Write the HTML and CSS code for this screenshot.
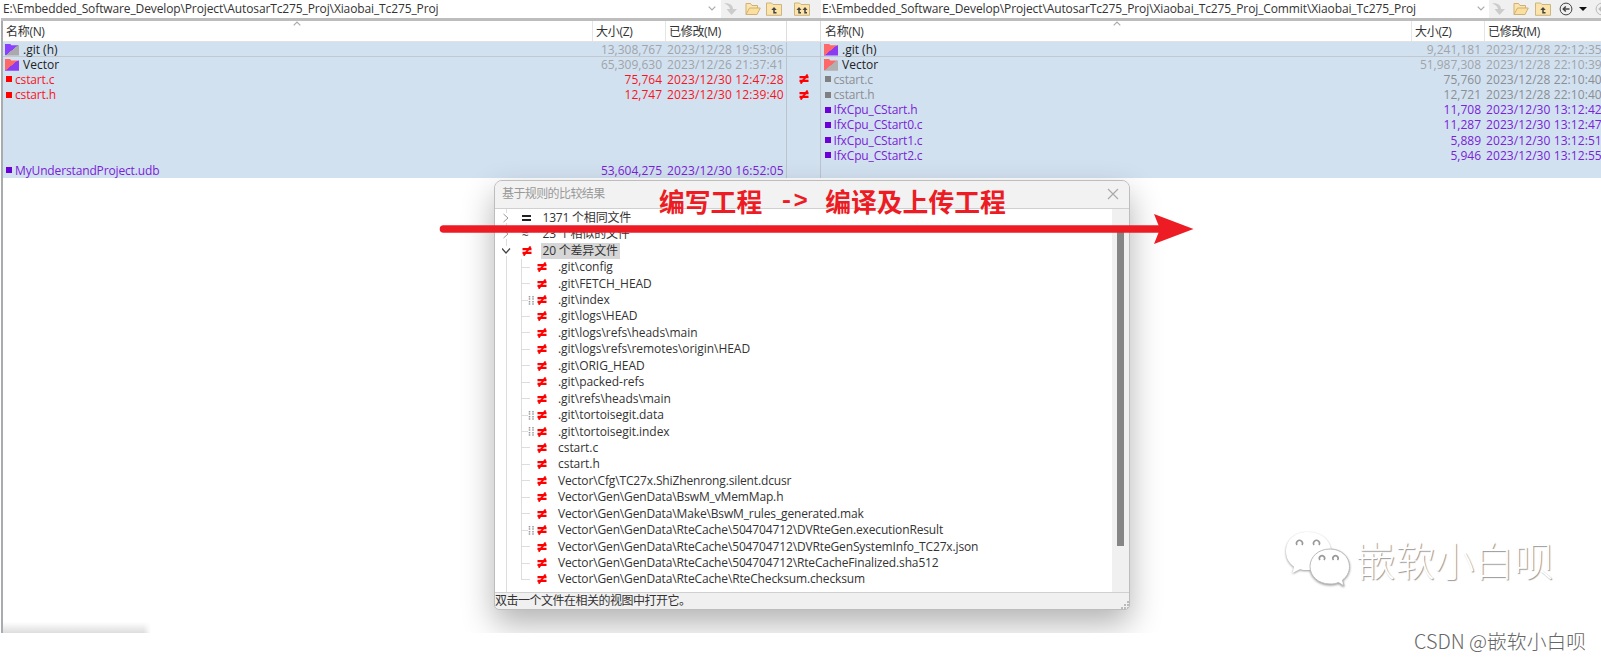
FILE: index.html
```
<!DOCTYPE html>
<html lang="zh-CN">
<head>
<meta charset="utf-8">
<title>Compare</title>
<link rel="stylesheet" href="styles.css">
</head>
<body>
<svg class="defs" aria-hidden="true">
  <defs>
    <symbol id="neq" viewBox="0 0 10 10"><path d="M.5 3.1h9M.5 6.900h9" stroke="#f00" stroke-width="2.300"/><path d="M8.600.5 1.600 9.600" stroke="#f00" stroke-width="2"/></symbol>
    <symbol id="chev" viewBox="0 0 8 5"><path d="M.7.7 4 4 7.300.7" fill="none" stroke="#aaa" stroke-width="1.2"/></symbol>
    <symbol id="go" viewBox="0 0 16 14"><path d="M1 1.500c5-1 9 1.500 9 5.500h4L8.500 13 3.500 7H7C6.500 4.500 4.500 2.500 1 1.500z" fill="#ccc"/></symbol>
    <symbol id="open" viewBox="0 0 16 14"><path d="M1 12.500V1.500h4.500l1.500 2h5.500v3" fill="#fbe5ae" stroke="#cfb173"/><path d="M1 12.500 4.500 6h10.800L12 12.500z" fill="#fbdf9f" stroke="#cfb173"/></symbol>
    <symbol id="up" viewBox="0 0 16 14"><path d="M.5 13.300V1h5l1.500 1.500h8.500v10.800z" fill="#fbe3aa" stroke="#cdb57f"/><path d="M8 6v4.700h2.500" fill="none" stroke="#444" stroke-width="1.500"/><path d="M5.300 8 8 5l2.700 3z" fill="#444"/></symbol>
    <symbol id="upup" viewBox="0 0 16 14"><path d="M.5 13.300V1h5l1.500 1.500h8.500v10.800z" fill="#fbe3aa" stroke="#cdb57f"/><path d="M5 6v4.700h2M11 6v4.700h2" fill="none" stroke="#444" stroke-width="1.500"/><path d="M2.500 8 5 5l2.500 3zM8.500 8 11 5l2.500 3z" fill="#444"/></symbol>
    <symbol id="back" viewBox="0 0 14 14"><circle cx="7" cy="7" r="5.900" fill="none" stroke="currentColor" stroke-width="1"/><path d="M10.500 7H4.500M6.800 4.500 4.300 7l2.500 2.500" fill="none" stroke="currentColor" stroke-width="1.500"/></symbol>
    <symbol id="bits" viewBox="0 0 7 9"><path d="M1.500 0v4M5 0v4M1.500 5v4M5 5v4" stroke="#999" stroke-width="1.500" stroke-dasharray="1.500 .7"/></symbol>
  </defs>
</svg>
<main class="window">
  <section class="side left">
    <div class="bar">
      <div class="path"><span class="p1">E:\Embedded_Software_Develop\Project\AutosarTc275_Proj\Xiaobai_Tc275_Proj</span><svg class="chev"><use href="#chev"/></svg></div>
      <div class="tools"><svg><use href="#go"/></svg><svg><use href="#open"/></svg><svg><use href="#up"/></svg></div>
    </div>
    <div class="head"><span>名称(N)</span><span>大小(Z)</span><span>已修改(M)</span><svg class="sort"><use href="#chev"/></svg></div>
    <div class="rows">
      <div class="row dir"><span class="name"><i class="folder vg"></i>.git (h)</span><span class="size">13,308,767</span><span class="date">2023/12/28 19:53:06</span></div>
      <div class="row dir"><span class="name"><i class="folder rv"></i>Vector</span><span class="size">65,309,630</span><span class="date">2023/12/26 21:37:41</span></div>
      <div class="row red"><span class="name"><i class="dot"></i>cstart.c</span><span class="size">75,764</span><span class="date">2023/12/30 12:47:28</span></div>
      <div class="row red"><span class="name"><i class="dot"></i>cstart.h</span><span class="size">12,747</span><span class="date">2023/12/30 12:39:40</span></div>
      <div class="row"></div><div class="row"></div><div class="row"></div><div class="row"></div>
      <div class="row violet"><span class="name"><i class="dot"></i>MyUnderstandProject.udb</span><span class="size">53,604,275</span><span class="date">2023/12/30 16:52:05</span></div>
    </div>
  </section>
  <section class="mid">
    <div class="bar"><svg><use href="#upup"/></svg></div>
    <div class="head"></div>
    <div class="rows">
      <div class="row dir"></div><div class="row"></div>
      <div class="row"><svg><use href="#neq"/></svg></div>
      <div class="row"><svg><use href="#neq"/></svg></div>
      <div class="row"></div><div class="row"></div><div class="row"></div><div class="row"></div><div class="row"></div>
    </div>
  </section>
  <section class="side right">
    <div class="bar">
      <div class="path"><span class="p2">E:\Embedded_Software_Develop\Project\AutosarTc275_Proj\Xiaobai_Tc275_Proj_Commit\Xiaobai_Tc275_Proj</span><svg class="chev"><use href="#chev"/></svg></div>
      <div class="tools"><svg><use href="#go"/></svg><svg><use href="#open"/></svg><svg><use href="#up"/></svg><svg class="circ"><use href="#back"/></svg><i class="tri"></i><svg class="circ off"><use href="#back"/></svg></div>
    </div>
    <div class="head"><span>名称(N)</span><span>大小(Z)</span><span>已修改(M)</span><svg class="sort"><use href="#chev"/></svg></div>
    <div class="rows">
      <div class="row dir"><span class="name"><i class="folder rv"></i>.git (h)</span><span class="size">9,241,181</span><span class="date">2023/12/28 22:12:35</span></div>
      <div class="row dir"><span class="name"><i class="folder rg"></i>Vector</span><span class="size">51,987,308</span><span class="date">2023/12/28 22:10:39</span></div>
      <div class="row gray"><span class="name"><i class="dot"></i>cstart.c</span><span class="size">75,760</span><span class="date">2023/12/28 22:10:40</span></div>
      <div class="row gray"><span class="name"><i class="dot"></i>cstart.h</span><span class="size">12,721</span><span class="date">2023/12/28 22:10:40</span></div>
      <div class="row violet"><span class="name"><i class="dot"></i>IfxCpu_CStart.h</span><span class="size">11,708</span><span class="date">2023/12/30 13:12:42</span></div>
      <div class="row violet"><span class="name"><i class="dot"></i>IfxCpu_CStart0.c</span><span class="size">11,287</span><span class="date">2023/12/30 13:12:47</span></div>
      <div class="row violet"><span class="name"><i class="dot"></i>IfxCpu_CStart1.c</span><span class="size">5,889</span><span class="date">2023/12/30 13:12:51</span></div>
      <div class="row violet"><span class="name"><i class="dot"></i>IfxCpu_CStart2.c</span><span class="size">5,946</span><span class="date">2023/12/30 13:12:55</span></div>
      <div class="row"></div>
    </div>
  </section>

  <div class="edge"></div>

  <div class="dialog">
    <div class="title"><span>基于规则的比较结果</span><svg viewBox="0 0 12 12"><path d="M1 1l10 10M11 1 1 11" stroke="#aaa" stroke-width="1.200"/></svg></div>
    <div class="content">
      <div class="tree">
        <div class="top"><svg class="tw" viewBox="0 0 10 10"><path d="M1.500 1 6 5 1.500 9" fill="none" stroke="#999"/></svg><b class="eq"></b><span>1371 个相同文件</span></div>
        <div class="top"><svg class="tw" viewBox="0 0 10 10"><path d="M1.500 1 6 5 1.500 9" fill="none" stroke="#999"/></svg><b class="approx">≈</b><span>23 个相似的文件</span></div>
        <div class="top"><svg class="tw" viewBox="0 0 10 10"><path d="M0 2.500 4 7l4-4.500" fill="none" stroke="#444" stroke-width="1.200"/></svg><svg class="ne"><use href="#neq"/></svg><span class="sel">20 个差异文件</span></div>
        <div class="kids">
          <div class="item"><svg class="ne"><use href="#neq"/></svg><span>.git\config</span></div>
          <div class="item"><svg class="ne"><use href="#neq"/></svg><span>.git\FETCH_HEAD</span></div>
          <div class="item bin"><svg class="bits"><use href="#bits"/></svg><svg class="ne"><use href="#neq"/></svg><span>.git\index</span></div>
          <div class="item"><svg class="ne"><use href="#neq"/></svg><span>.git\logs\HEAD</span></div>
          <div class="item"><svg class="ne"><use href="#neq"/></svg><span>.git\logs\refs\heads\main</span></div>
          <div class="item"><svg class="ne"><use href="#neq"/></svg><span>.git\logs\refs\remotes\origin\HEAD</span></div>
          <div class="item"><svg class="ne"><use href="#neq"/></svg><span>.git\ORIG_HEAD</span></div>
          <div class="item"><svg class="ne"><use href="#neq"/></svg><span>.git\packed-refs</span></div>
          <div class="item"><svg class="ne"><use href="#neq"/></svg><span>.git\refs\heads\main</span></div>
          <div class="item bin"><svg class="bits"><use href="#bits"/></svg><svg class="ne"><use href="#neq"/></svg><span>.git\tortoisegit.data</span></div>
          <div class="item bin"><svg class="bits"><use href="#bits"/></svg><svg class="ne"><use href="#neq"/></svg><span>.git\tortoisegit.index</span></div>
          <div class="item"><svg class="ne"><use href="#neq"/></svg><span>cstart.c</span></div>
          <div class="item"><svg class="ne"><use href="#neq"/></svg><span>cstart.h</span></div>
          <div class="item long"><svg class="ne"><use href="#neq"/></svg><span>Vector\Cfg\TC27x.ShiZhenrong.silent.dcusr</span></div>
          <div class="item long"><svg class="ne"><use href="#neq"/></svg><span>Vector\Gen\GenData\BswM_vMemMap.h</span></div>
          <div class="item long"><svg class="ne"><use href="#neq"/></svg><span>Vector\Gen\GenData\Make\BswM_rules_generated.mak</span></div>
          <div class="item bin long"><svg class="bits"><use href="#bits"/></svg><svg class="ne"><use href="#neq"/></svg><span>Vector\Gen\GenData\RteCache\504704712\DVRteGen.executionResult</span></div>
          <div class="item long"><svg class="ne"><use href="#neq"/></svg><span>Vector\Gen\GenData\RteCache\504704712\DVRteGenSystemInfo_TC27x.json</span></div>
          <div class="item long"><svg class="ne"><use href="#neq"/></svg><span>Vector\Gen\GenData\RteCache\504704712\RteCacheFinalized.sha512</span></div>
          <div class="item long"><svg class="ne"><use href="#neq"/></svg><span>Vector\Gen\GenData\RteCache\RteChecksum.checksum</span></div>
        </div>
      </div>
      <div class="scroll"><div class="thumb"></div></div>
    </div>
    <div class="status"><span>双击一个文件在相关的视图中打开它。</span><svg viewBox="0 0 8 8"><path d="M6 0h2v2H6zM3 3h2v2H3zM6 3h2v2H6zM0 6h2v2H0zM3 6h2v2H3zM6 6h2v2H6z" fill="#bbb"/></svg></div>
  </div>

  <div class="note"><span>编写工程</span><span class="to">-&gt;</span><span>编译及上传工程</span></div>
  <svg class="arrow" viewBox="0 0 760 32"><path d="M4.500 16H730" stroke="#ed1c24" stroke-width="7.600" stroke-linecap="round"/><path d="M715 1 754.500 16 715 31 721 16z" fill="#ed1c24"/></svg>

  <div class="wechat">
    <svg viewBox="0 0 68 58">
      <path d="M23.500 2C10.500 2 2 10.500 2 21.500c0 6.500 3 11.500 8 15.300L8.500 43l7.500-3.800c4 1 7 1.100 11 .6C43 38 48 30 47 19.500 45.500 8 35 2 23.500 2z"/>
      <path class="front" d="M46 19c-12 0-20 8-20 17.500S34 54 46 54c3.500 0 6-.5 8.500-1.500L60 56l-1.500-6c4.500-3.200 7-8 7-13.500C65.500 27 57.500 19 46 19z"/>
      <g class="eyes"><path d="M13 15a3 3 0 1 1 5 0M30 15a3 3 0 1 1 5 0M36 30a2.600 2.600 0 1 1 4 0M49.500 30a2.600 2.600 0 1 1 4 0"/></g>
    </svg>
    <span>嵌软小白呗</span>
  </div>
</main>
<footer>CSDN @嵌软小白呗</footer>
</body>
</html>
```
FILE: styles.css
```
* { box-sizing: border-box; }
body { margin: 0; width: 1601px; height: 661px; overflow: hidden; background: #fff; font: 12px/15.2px "Open Sans", "Noto Sans CJK SC", sans-serif; color: #333; }
span { white-space: nowrap; }
svg { display: block; flex: none; }
.defs { position: absolute; width: 0; height: 0; }
.window { position: relative; display: grid; grid-template-columns: 787px 34px 780px; height: 633px; overflow: hidden; }
.side, .mid { min-width: 0; overflow: hidden; }
.side.left { border-left: 1px solid #fff; }
.bar { height: 21px; display: flex; background: #f0f0f0; border-bottom: 3px solid #bdbdbd; }
.path { flex: none; width: 720px; background: #fff; display: flex; justify-content: space-between; align-items: center; padding: 0 5px 1px 2px; }
.right .path { width: 668px; padding-left: 1px; padding-right: 4px; }
.p1 { letter-spacing: -.12px; }
.p2 { letter-spacing: -.11px; }
.chev { width: 8px; height: 5px; }
.tools { display: flex; align-items: center; gap: 6px; padding-left: 2px; }
.left .tools { gap: 5.500px; }
.tools svg, .mid .bar svg { width: 16px; height: 14px; }
.tools .circ { width: 14px; height: 14px; margin-left: 2px; color: #444; }
.tools .off { color: #bbb; }
.tri { border: 4px solid transparent; border-top: 4px solid #111; border-bottom: 0; }
.mid .bar { padding: 2px 0 0 7px; }
.head { height: 20.500px; position: relative; display: grid; grid-template-columns: 591px 73px 1fr; align-items: center; border-bottom: 1px solid #e2e2e2; }
.right .head { grid-template-columns: 590px 73px 1fr; }
.head span { height: 20px; line-height: 21.500px; padding-left: 3px; border-left: 1px solid #e5e5e5; letter-spacing: -.3px; }
.head span:first-child { border: 0; padding-left: 5px; }
.right .head span:first-child { padding-left: 4px; }
.left .head, .mid .head { border-right: 1px solid #ddd; }
.sort { position: absolute; left: 292px; top: 0; width: 8px; height: 5px; transform: scaleY(-1); }
.rows { background: #d2e1f0; padding-bottom: .5px; }
.left .rows, .mid .rows { border-right: 1px solid #bcc5ce; }
.row { height: 15.170px; display: grid; grid-template-columns: 591px 70px 1fr; align-items: center; line-height: 15px; }
.right .row { grid-template-columns: 590px 70px 1fr; }
.row:first-child { border-bottom: 1px solid #c2c8ce; }
.name { display: flex; align-items: center; gap: 3px; padding-left: 5px; letter-spacing: -.14px; }
.right .name { padding-left: 4px; gap: 2.500px; }
.size { text-align: right; }
.date { padding-left: 5px; white-space: nowrap; letter-spacing: .08px; }
.left .date { letter-spacing: .13px; }
.dir { color: #a0a4a8; }
.dir .name { color: #222; gap: 4px; padding-left: 4px; letter-spacing: 0; }
.right .dir .name { padding-left: 3px; }
.red { color: #f8141c; }
.violet { color: #7a22d8; }
.gray { color: #8b8e92; }
.dot { width: 6px; height: 6px; background: #f00; }
.violet .dot { background: #6c00d8; }
.gray .dot { background: #808080; }
.folder { width: 14px; height: 12px; margin-top: 1px; clip-path: polygon(0 0, 35% 0, 45% 14%, 100% 14%, 100% 100%, 0 100%); }
.vg { background: linear-gradient(141deg, #8c40ff 50%, #aaa 51%); }
.rv { background: linear-gradient(141deg, #ff6868 50%, #8b3cf0 51%); }
.rg { background: linear-gradient(141deg, #ff6868 50%, #b0b0b0 51%); }
.mid .row { display: flex; justify-content: center; align-items: center; }
.mid .row svg { width: 10px; height: 10px; }
.edge { position: absolute; left: 1px; top: 21px; width: 2px; bottom: 0; background: #a9acaf; }
.window::after { content: ""; position: absolute; left: 3px; bottom: 0; width: 148px; height: 11px; background: linear-gradient(#fff0, #ddd); -webkit-mask: linear-gradient(90deg, #000 95%, transparent); }
.dialog { position: absolute; left: 494px; top: 180px; width: 636px; height: 429.500px; border: 1.500px solid #bdbdbd; border-radius: 8px 8px 5px 5px; background: #f0f0f0; display: flex; flex-direction: column; overflow: hidden; box-shadow: 0 14px 32px rgba(0,0,0,.3); }
.title { height: 28px; flex: none; display: flex; justify-content: space-between; align-items: center; background: #f2f2f2; padding: 0 10px 1px 7px; color: #999; border-bottom: 1px solid #d0d0d0; letter-spacing: -.6px; }
.title svg { width: 12px; height: 12px; }
.content { flex: 1; min-height: 0; display: flex; background: #fff; }
.tree { flex: 1; min-width: 0; overflow: hidden; padding-top: .6px; background: linear-gradient(#ddd, #ddd) 11px 0 / 1px 100% no-repeat; }
.top, .item { height: 16.450px; display: flex; align-items: center; line-height: 16px; }
.top { padding-left: 7px; }
.tw { width: 10px; height: 10px; margin-right: 10px; background: #fff; }
.top > span { padding: 0 2px; margin-left: 8.500px; letter-spacing: -.2px; }
.sel { background: #d6d6d6; }
.ne { width: 10px; height: 10px; }
.eq { width: 9px; height: 6px; margin-right: 1px; border: solid #222; border-width: 2px 0; }
.approx { width: 10px; font-weight: 400; }
.kids { margin-left: 26px; background: linear-gradient(#ddd, #ddd) 0 0 / 1px calc(100% - 8px) no-repeat; }
.item::before { content: ""; width: 9px; height: 1px; background: #ddd; margin-right: 7px; }
.item.bin::before { width: 7px; margin-right: 0; }
.bits { width: 7px; height: 9px; margin-right: 2px; }
.item span { margin-left: 11px; letter-spacing: -.04px; }
.item.long span { letter-spacing: -.14px; }
.scroll { width: 17px; background: #f0f0f0; padding: 20px 0 0 4.500px; }
.thumb { width: 7px; height: 317px; background: #858585; }
.status { height: 17px; flex: none; display: flex; justify-content: space-between; align-items: center; border-top: 1px solid #d0d0d0; line-height: 14px; }
.status span { letter-spacing: -.5px; }
.status svg { width: 8px; height: 8px; align-self: flex-end; }
.note { position: absolute; left: 659px; top: 186px; display: flex; color: #ed1c24; font: bold 25.800px/30px "Noto Sans CJK SC", sans-serif; }
.note .to { font: bold 24px/31px "Liberation Mono", monospace; width: 46px; margin: 0 0 0 17px; white-space: pre; }
.arrow { position: absolute; left: 439px; top: 213px; width: 760px; height: 32px; }
.wechat { position: absolute; left: 1284px; top: 530px; display: flex; align-items: center; gap: 4px; }
.wechat svg { width: 68px; height: 58px; fill: #fff; filter: drop-shadow(.8px 1px .8px #999); }
.front { stroke: #bbb; stroke-width: 1; }
.wechat .eyes { fill: none; stroke: #999; stroke-width: 1.600; }
.wechat span { font: 300 39.500px/58px "Noto Sans CJK SC", sans-serif; color: #fff; text-shadow: 1px 1px 1px #999; }
footer { height: 28px; padding: 0 15px 0 0; text-align: right; font: 300 19.800px/16px "Noto Sans CJK SC", sans-serif; color: #666; }
```
